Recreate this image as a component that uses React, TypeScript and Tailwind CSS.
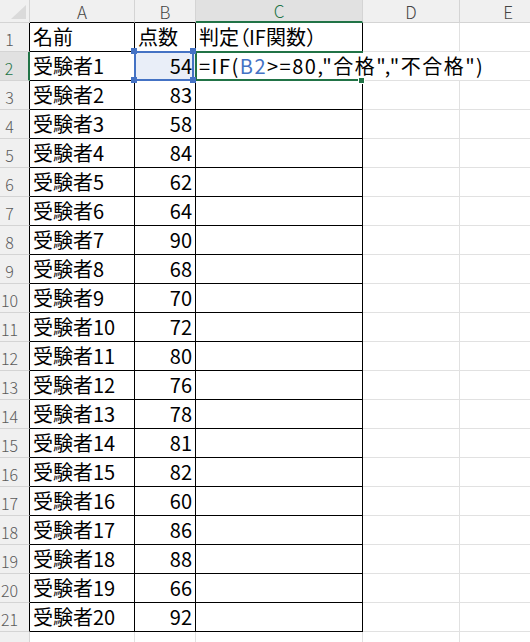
import React from 'react';

const scores = [54, 83, 58, 84, 62, 64, 90, 68, 70, 72, 80, 76, 78, 81, 82, 60, 86, 88, 66, 92];
const rows = Array.from({ length: 22 }, (_, i) => i + 1);

const rowHeaderCls = (r: number) => {
    if (r === 2) {
        return 'flex items-end justify-center pr-[10px] pb-[4px] bg-[#e1e1e1] text-[#217346] border-b border-b-[#d4d4d4] border-r-2 border-r-[#217346]';
    }
    if (r <= 21) {
        return 'flex items-end justify-center pr-[10px] pb-[4px] bg-[#f0f0f0] text-[#5a5a5a] border-b border-b-[#d4d4d4] border-r border-r-black';
    }
    return 'flex items-end justify-center pr-[10px] pb-[4px] bg-[#f0f0f0] text-[#5a5a5a] border-b border-b-[#d4d4d4] border-r border-r-[#d4d4d4]';
};

const tableCell = (r: number) =>
    r <= 21 ? 'border-r border-b border-r-black border-b-black' : 'border-r border-r-[#e1e1e1]';

const App: React.FC = () => {
    return (
        <div className="w-[530px] h-[642px] overflow-hidden bg-white text-black font-['Noto_Sans_CJK_JP',sans-serif]">
            <div className="grid w-max grid-cols-[30px_105px_61px_167px_97px_97px] grid-rows-[23px_repeat(22,29px)]">
                {/* corner */}
                <div className="relative bg-[#f0f0f0] border-r border-b border-r-[#d4d4d4] border-b-[#d4d4d4]">
                    <svg className="absolute left-0 top-0" width="29" height="22" viewBox="0 0 29 22">
                        <polygon points="26,5 26,19 11,19" fill="#dadada" />
                    </svg>
                </div>
                {/* column headers */}
                <div className="flex items-center justify-center bg-[#f0f0f0] text-[17px] font-light leading-none text-[#444] border-r border-b border-r-[#d4d4d4] border-b-black">A</div>
                <div className="flex items-center justify-center bg-[#f0f0f0] text-[17px] font-light leading-none text-[#444] border-r border-b border-r-[#d4d4d4] border-b-black">B</div>
                <div className="flex items-center justify-center bg-[#e1e1e1] text-[17px] font-light leading-none text-[#217346] border-r border-b-2 border-r-[#d4d4d4] border-b-[#217346]">C</div>
                <div className="flex items-center justify-center bg-[#f0f0f0] text-[17px] font-light leading-none text-[#444] border-r border-b border-r-[#d4d4d4] border-b-[#d4d4d4]">D</div>
                <div className="flex items-center justify-center bg-[#f0f0f0] text-[17px] font-light leading-none text-[#444] border-r border-b border-r-[#d4d4d4] border-b-[#d4d4d4]">E</div>

                {rows.map((r) => (
                    <React.Fragment key={r}>
                        <div className={rowHeaderCls(r)}>
                            <span className="text-[16px] font-light leading-[16px]">{r}</span>
                        </div>

                        {/* A */}
                        <div className={`flex items-end pl-[3px] pb-[4px] text-[20px] leading-[20px] whitespace-nowrap ${tableCell(r)}`}>
                            {r === 1 ? '名前' : r <= 21 ? `受験者${r - 1}` : ''}
                        </div>

                        {/* B */}
                        <div className={`relative flex items-end pb-[4px] text-[20px] leading-[20px] whitespace-nowrap ${r === 1 ? 'pl-[3px]' : 'justify-end pr-[3px]'} ${tableCell(r)} ${r === 2 ? 'bg-[#e9eef8]' : ''}`}>
                            {r === 1 ? '点数' : r <= 21 ? scores[r - 2] : ''}
                            {r === 2 && (
                                <>
                                    <div className="absolute -left-px -top-px w-[60px] h-[30px] border-2 border-[#4472c4] z-30" />
                                    <div className="absolute -left-[4px] -top-[4px] w-[6px] h-[6px] bg-[#4472c4] z-30" />
                                    <div className="absolute left-[55px] -top-[4px] w-[6px] h-[6px] bg-[#4472c4] z-30" />
                                    <div className="absolute -left-[4px] top-[25px] w-[6px] h-[6px] bg-[#4472c4] z-30" />
                                    <div className="absolute left-[55px] top-[25px] w-[6px] h-[6px] bg-[#4472c4] z-30" />
                                </>
                            )}
                        </div>

                        {/* C */}
                        <div className={`relative flex items-end pl-[3px] pb-[4px] text-[20px] leading-[20px] whitespace-nowrap ${tableCell(r)}`}>
                            {r === 1 && (
                                <span>
                                    判定<span className="[font-feature-settings:'palt']">（</span>IF関数）
                                </span>
                            )}
                            {r === 2 && (
                                <>
                                    <div className="absolute left-0 top-0 bottom-0 z-10 flex items-end bg-white pl-[3px] pr-[4px] pb-[4px] whitespace-nowrap tracking-[1.5px]">
                                        =IF(<span className="text-[#4472c4]">B2</span>&gt;=80,"合格","不合格")
                                    </div>
                                    <div className="absolute -left-px -top-px w-[168px] h-[30px] border-2 border-r-0 border-[#217346] z-20" />
                                    <div className="absolute left-[162px] top-[25px] w-[7px] h-[7px] bg-[#217346] border border-white z-20" />
                                </>
                            )}
                        </div>

                        {/* D, E */}
                        <div className="border-r border-b border-r-[#e1e1e1] border-b-[#e1e1e1]" />
                        <div className="border-r border-b border-r-[#e1e1e1] border-b-[#e1e1e1]" />
                    </React.Fragment>
                ))}
            </div>
        </div>
    );
};

export default App;
